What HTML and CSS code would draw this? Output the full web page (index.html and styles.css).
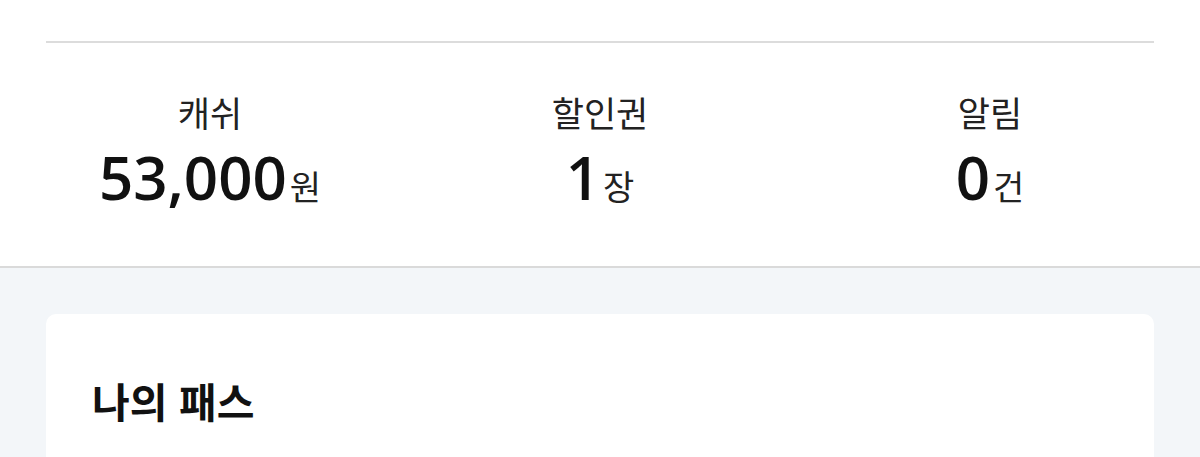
FILE: index.html
```html
<!DOCTYPE html>
<html lang="ko">
<head>
<meta charset="utf-8">
<link rel="stylesheet" href="styles.css">
</head>
<body>
<section class="summary">
  <div class="rule"></div>
  <div class="stats">
    <div class="stat">
      <div class="label">캐쉬</div>
      <div class="value"><span class="num">53,000</span><span class="unit">원</span></div>
    </div>
    <div class="stat">
      <div class="label">할인권</div>
      <div class="value"><span class="num">1</span><span class="unit">장</span></div>
    </div>
    <div class="stat">
      <div class="label">알림</div>
      <div class="value"><span class="num">0</span><span class="unit">건</span></div>
    </div>
  </div>
</section>
<main class="content">
  <div class="card">
    <h2 class="card-title">나의 패스</h2>
  </div>
</main>
</body>
</html>
```
FILE: styles.css
```css
html, body {
  margin: 0;
  padding: 0;
}
body {
  background: #f3f6f9;
  font-family: "Noto Sans CJK KR", "Noto Sans", sans-serif;
  color: #111;
  height: 457px;
  overflow: hidden;
}
.summary {
  background: #fff;
  padding-top: 41px;
  height: 225px;
  border-bottom: 2px solid #dadada;
}
.rule {
  height: 2px;
  background: #dcdcdc;
  margin: 0 46px;
}
.stats {
  display: grid;
  grid-template-columns: repeat(3, 1fr);
  padding: 0 15px;
  margin-top: 49px;
}
.stat {
  display: flex;
  flex-direction: column;
  align-items: center;
}
.label {
  font-size: 35px;
  line-height: 40px;
  color: #222;
  font-weight: 400;
}
.value {
  display: flex;
  align-items: baseline;
  margin-top: 15px;
  line-height: 60px;
}
.num {
  font-family: "Open Sans", "Noto Sans", sans-serif;
  font-size: 60px;
  font-weight: 600;
  color: #111;
}
.unit {
  font-size: 34px;
  font-weight: 400;
  color: #222;
  margin-left: 3px;
}
.content {
  padding: 46px 46px 0;
}
.card {
  background: #fff;
  border-radius: 10px;
  height: 200px;
  padding: 60px 46px 0;
}
.card-title {
  margin: 0;
  font-size: 41px;
  line-height: 52px;
  font-weight: 700;
  color: #111;
}
```
